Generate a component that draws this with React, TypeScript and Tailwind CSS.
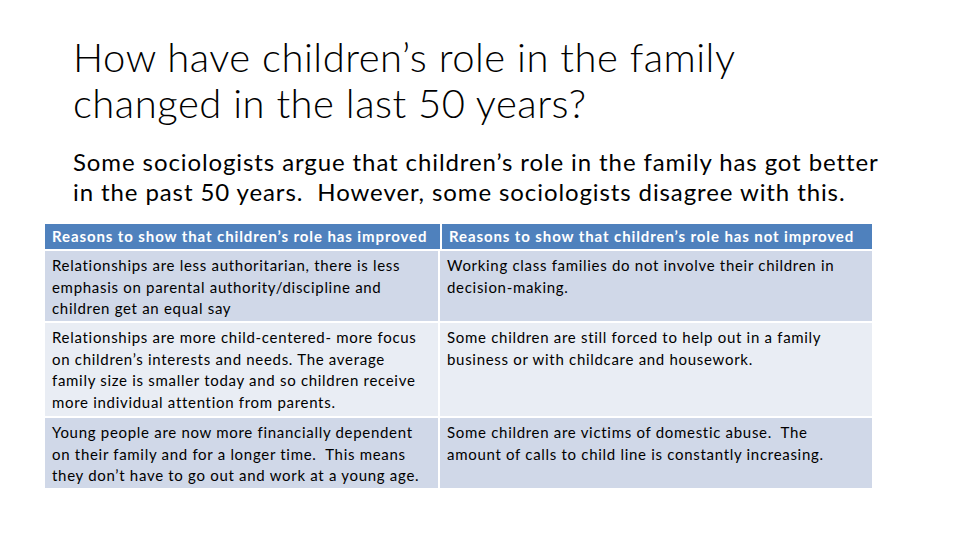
const rows = [
  {
    left: 'Relationships are less authoritarian, there is less emphasis on parental authority/discipline and children get an equal say',
    right: 'Working class families do not involve their children in decision-making.',
    bg: 'bg-[#d0d8e8]',
    h: 'h-[70px]',
  },
  {
    left: 'Relationships are more child-centered- more focus on children\u2019s interests and needs. The average family size is smaller today and so children receive more individual attention from parents.',
    right: 'Some children are still forced to help out in a family business or with childcare and housework.',
    bg: 'bg-[#e9edf4]',
    h: 'h-[93px]',
  },
  {
    left: 'Young people are now more financially dependent on their family and for a longer time.  This means they don\u2019t have to go out and work at a young age.',
    right: 'Some children are victims of domestic abuse.  The amount of calls to child line is constantly increasing.',
    bg: 'bg-[#d0d8e8]',
    h: 'h-[70px]',
  },
];

export default function App() {
  return (
    <div className="w-[960px] h-[540px] bg-white text-black overflow-hidden font-['Lato',sans-serif]">
      <div className="pl-[73px] pt-[34px]">
        <h1 className="text-[40px] leading-[46px] font-light tracking-[0.5px] whitespace-pre-line">
          {'How have children\u2019s role in the family\nchanged in the last 50 years?'}
        </h1>
        <p className="mt-[21px] text-[24px] leading-[30px] tracking-[0.9px] whitespace-pre-wrap">
          {'Some sociologists argue that children\u2019s role in the family has got better\nin the past 50 years.  However, some sociologists disagree with this.'}
        </p>
      </div>
      <div className="ml-[45px] mt-[17px] w-[827px] flex flex-col gap-[2px] text-[15px] leading-[21.5px] tracking-[0.7px]">
        <div className="flex gap-[2px] h-[25px] bg-[#4f81bd] text-white font-bold tracking-[0.9px]">
          <div className="w-[393px] px-[7px] flex items-center whitespace-nowrap">Reasons to show that children’s role has improved</div>
          <div className="flex-1 px-[7px] flex items-center border-l-2 border-white whitespace-nowrap">Reasons to show that children’s role has not improved</div>
        </div>
        {rows.map((r, i) => (
          <div key={i} className={`flex gap-[2px] ${r.h}`}>
            <div className={`w-[393px] px-[7px] pt-[4px] whitespace-pre-wrap ${r.bg}`}>{r.left}</div>
            <div className={`flex-1 px-[7px] pt-[4px] whitespace-pre-wrap ${r.bg}`}>{r.right}</div>
          </div>
        ))}
      </div>
    </div>
  );
}
